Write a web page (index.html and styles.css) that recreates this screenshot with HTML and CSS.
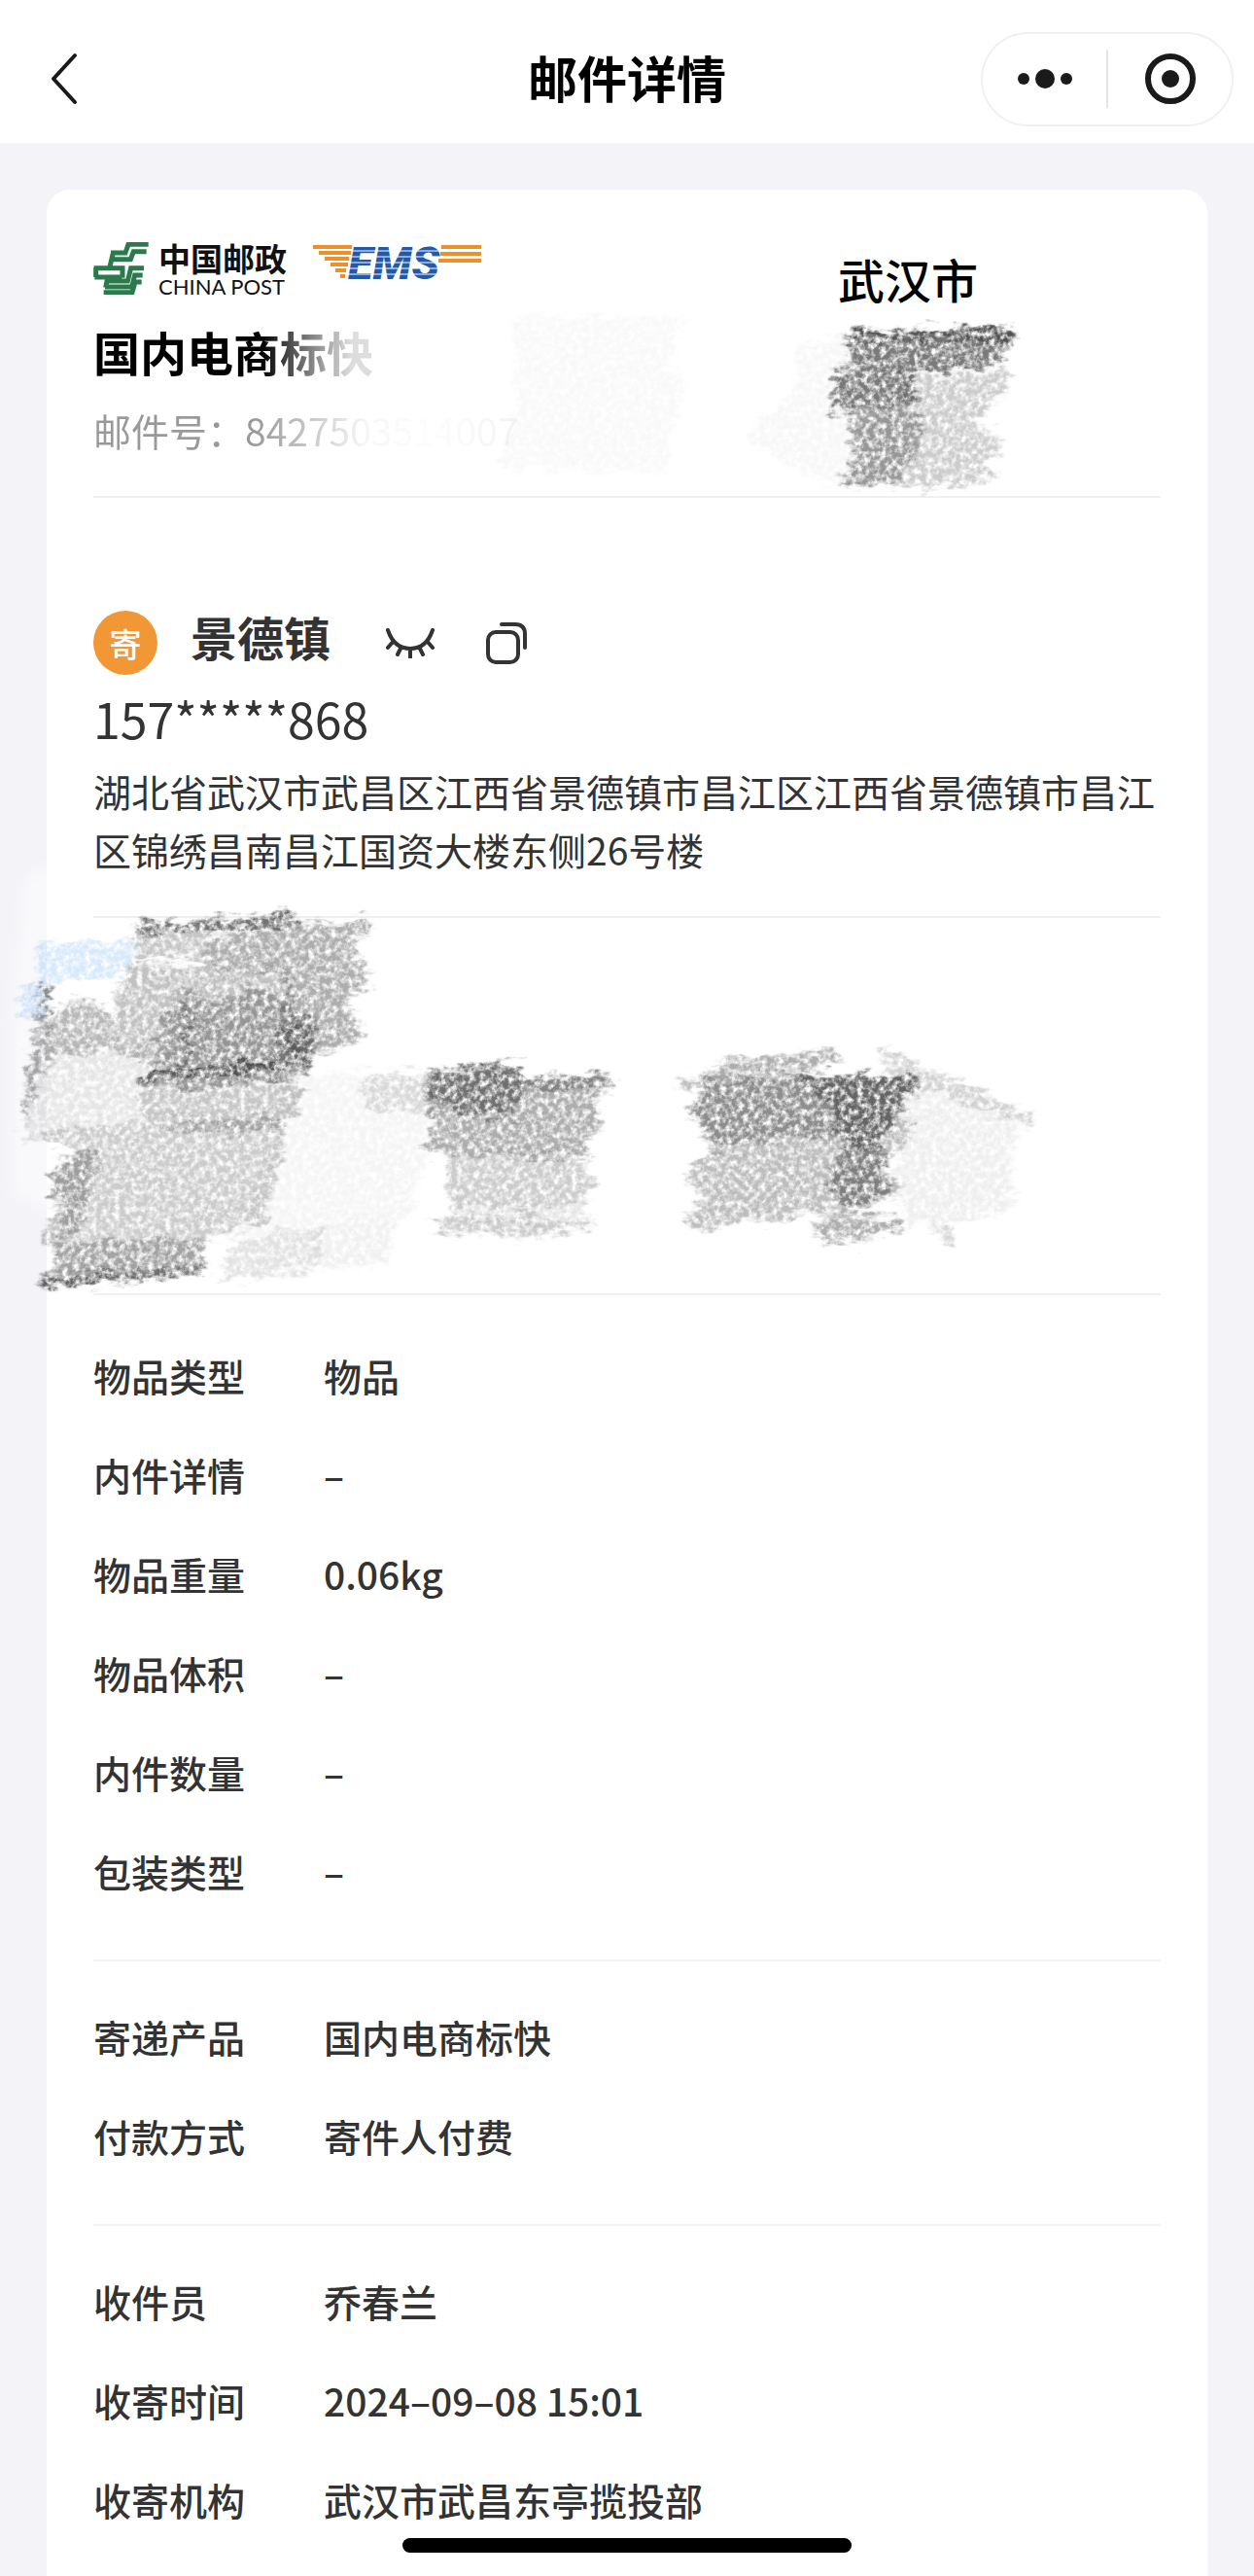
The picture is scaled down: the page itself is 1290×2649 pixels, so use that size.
FILE: index.html
```html
<!DOCTYPE html>
<html lang="zh-CN">
<head>
    <meta charset="UTF-8">
    <meta name="viewport" content="width=device-width, initial-scale=1">
    <title>邮件详情</title>
    <link rel="stylesheet" href="styles.css">
</head>

<body>
<header class="navbar">
    <button class="back" aria-label="返回">
        <svg width="32" height="56" viewBox="0 0 32 56"><path d="M27 4L5 28l22 24"/></svg>
    </button>
    <h1 class="title">邮件详情</h1>
    <div class="capsule">
        <button class="capsule-btn" aria-label="更多">
            <svg width="60" height="24" viewBox="0 0 60 24">
                <circle cx="8" cy="12" r="6"/><circle cx="30" cy="12" r="10"/><circle cx="52" cy="12" r="6"/>
            </svg>
        </button>
        <button class="capsule-btn" aria-label="关闭">
            <svg width="52" height="52" viewBox="0 0 52 52">
                <circle class="ring" cx="26" cy="26" r="23"/><circle cx="26" cy="26" r="9"/>
            </svg>
        </button>
    </div>
</header>

<main class="page">
    <div class="card">
        <section class="summary">
            <div class="product">
                <div class="logos">
                    <svg class="post-mark" width="58" height="54" viewBox="0 0 170 162">
                        <path d="M168 7h-62l-9 26H52M162 29h-40l-9 24H48M60 30L48 80M0 80h88v30M2 108h84M6 78v30M154 80h-40l-10 40H40l-4 20M150 102h-24l-9 36H34M30 155h88l9-32h20"/>
                    </svg>
                    <div class="post-name">
                        <span class="post-cn">中国邮政</span>
                        <span class="post-en">CHINA POST</span>
                    </div>
                    <svg class="ems" width="174" height="48" viewBox="0 0 174 48">
                        <path class="wing" d="M0 2h40M6 8h33M12 14h25M18 20h18M23 26h11M28 32h5M132 2h41M131 9h42M129 16h44"/>
                        <text x="36" y="35">EMS</text>
                        <path class="cut" d="M40 6h90M38 12h92M37 18h92M36 24h92M35 30h92"/>
                    </svg>
                </div>
                <h2 class="product-name">国内电商标快</h2>
                <p class="mail-no">邮件号：8427503514007</p>
            </div>
            <div class="dest">武汉市</div>
            <svg class="smudge smudge-top" width="640" height="220" viewBox="500 310 640 220">
                <g filter="url(#chalk)" fill="#333">
                    <path opacity=".03" d="M530 325L700 325 690 375 705 390 685 485 510 480 530 440z"/>
                    <path opacity=".04" d="M820 358L875 340 875 500 850 498 770 455 770 440 795 425 820 390z"/>
                    <path opacity=".65" d="M870 342L1040 337 1045 345 1040 357 1030 362 1028 376 930 384 872 375 876 355z"/>
                    <path opacity=".6" d="M870 341L1042 336 1045 345 1038 352 990 350 870 349z"/>
                    <path opacity=".65" d="M858 380L930 380 945 395 940 415 925 422 850 423 857 400z"/>
                    <path opacity=".25" d="M930 388L1037 383 1035 405 1015 420 1000 435 1025 450 1030 460 1005 480 1030 488 985 502 865 498 865 488 878 478 872 425 930 420z"/>
                    <path opacity=".35" d="M875 424L950 424 945 465 920 498 866 498 880 480z"/>
                </g>
            </svg>
        </section>

        <section class="sender">
            <div class="sender-head">
                <span class="badge">寄</span>
                <h2 class="sender-name">景德镇</h2>
                <button class="icon-btn eye" aria-label="显示完整信息">
                    <svg width="50" height="32" viewBox="0 0 50 32">
                        <path d="M2 3c4 12 12 19 23 19S44 15 48 3M8 14l-6 7M16 20l-4 8M25 22v9M34 20l4 8M42 14l6 7"/>
                    </svg>
                </button>
                <button class="icon-btn copy" aria-label="复制">
                    <svg width="44" height="44" viewBox="0 0 44 44">
                        <rect x="3" y="11" width="31" height="31" rx="8"/>
                        <path d="M17 3h14q10 0 10 10v14"/>
                    </svg>
                </button>
            </div>
            <p class="phone">157*****868</p>
            <p class="address">湖北省武汉市武昌区江西省景德镇市昌江区江西省景德镇市昌江区锦绣昌南昌江国资大楼东侧26号楼</p>
        </section>

        <!-- 收件人信息已涂抹 -->
        <section class="receiver">
            <svg class="smudge smudge-main" width="1100" height="470" viewBox="0 880 1100 470">
                <defs>
                    <filter id="chalk" x="-5%" y="-5%" width="110%" height="110%" color-interpolation-filters="sRGB">
                        <feGaussianBlur in="SourceGraphic" stdDeviation="2" result="blur"/>
                        <feTurbulence type="fractalNoise" baseFrequency=".05 .12" numOctaves="3" seed="4" result="edge"/>
                        <feDisplacementMap in="blur" in2="edge" scale="26" xChannelSelector="R" yChannelSelector="G" result="rough"/>
                        <feTurbulence type="fractalNoise" baseFrequency=".17" numOctaves="4" seed="9"/>
                        <feColorMatrix values="0 0 0 0 0  0 0 0 0 0  0 0 0 0 0  2.4 0 0 0 -.5" result="grain"/>
                        <feComposite in="rough" in2="grain" operator="in"/>
                    </filter>
                    <filter id="soft" x="-30%" y="-10%" width="160%" height="120%">
                        <feGaussianBlur stdDeviation="8"/>
                    </filter>
                </defs>
                <path fill="#fff" opacity=".5" filter="url(#soft)" d="M24 900L60 890 60 1250 10 1230 10 1050z"/>
                <g filter="url(#chalk)" fill="#333">
                    <path fill="#4a9af0" opacity=".22" d="M36 970L145 970 130 1002 50 1012 45 1050 18 1045 20 1018 38 1005z"/>
                    <path opacity=".7" d="M139 951L308 940 312 953 210 957 140 960z"/>
                    <path opacity=".28" d="M140 960L212 958 212 985 140 985z"/>
                    <path opacity=".4" d="M210 964L380 945 380 960 365 968 368 985 378 993 378 1010 360 1025 358 1040 372 1048 374 1070 350 1078 320 1092 300 1096 290 1000 212 996z"/>
                    <path opacity=".3" d="M118 1025L135 990 212 996 295 996 310 1096 160 1098 118 1080z"/>
                    <path opacity=".3" d="M165 1045L190 1018 230 1030 265 1010 330 1055 315 1096 160 1096z"/>
                    <path opacity=".35" d="M285 1050L330 1050 318 1094 283 1096z"/>
                    <path opacity=".5" d="M190 1035L196 1035 196 1095 190 1095z"/>
                    <path opacity=".5" d="M145 1102L285 1093 322 1089 314 1108 230 1117 147 1117z"/>
                    <path opacity=".7" d="M145 1100L285 1093 285 1104 145 1108z"/>
                    <path opacity=".35" d="M42 1012L52 1012 50 1055 60 1038 85 1025 112 1040 120 1078 60 1085 48 1090z"/>
                    <path opacity=".35" d="M42 1012L52 1012 48 1080 30 1140 26 1175 24 1130 35 1070z"/>
                    <path opacity=".12" d="M30 1080L150 1075 145 1150 60 1165 26 1175z"/>
                    <path opacity=".28" d="M145 1115L310 1115 310 1142 285 1160 250 1165 145 1155z"/>
                    <path opacity=".25" d="M85 1157L290 1150 290 1200 270 1258 200 1275 60 1275 60 1240 50 1210 80 1182 45 1172 48 1164z"/>
                    <path opacity=".3" d="M55 1195L105 1180 92 1230 80 1272 45 1278 50 1255 68 1235 52 1225z"/>
                    <path opacity=".45" d="M55 1277L210 1273 212 1304 45 1326 42 1315 57 1302z"/>
                    <path opacity=".6" d="M42 1314L215 1302 215 1308 45 1326z"/>
                    <path opacity=".05" d="M235 1275L420 1250 450 1160 450 1110 370 1100 290 1110 280 1180z"/>
                    <path opacity=".14" d="M240 1273L330 1262 330 1306 225 1316z"/>
                    <path opacity=".07" d="M325 1262L410 1252 400 1300 325 1306z"/>
                    <path opacity=".14" d="M370 1107L450 1100 450 1150 375 1140z"/>
                    <path opacity=".4" d="M440 1100L535 1095 540 1110 628 1105 630 1120 615 1125 615 1150 620 1160 600 1175 605 1190 450 1185 435 1185 445 1160 435 1125z"/>
                    <path opacity=".25" d="M460 1185L600 1185 600 1200 612 1215 605 1234 585 1240 465 1240 458 1215z"/>
                    <path opacity=".5" d="M445 1100L535 1095 540 1110 530 1150 480 1145 440 1125z"/>
                    <path opacity=".35" d="M540 1108L628 1106 628 1118 535 1122z"/>
                    <path opacity=".25" d="M448 1254L530 1250 612 1256 605 1265 560 1272 448 1265z"/>
                    <path opacity=".12" d="M465 1238L600 1238 600 1255 465 1255z"/>
                    <path opacity=".4" d="M740 1092L862 1081 862 1092 820 1102 735 1106z"/>
                    <path opacity=".32" d="M688 1109L740 1105 945 1105 947 1120 930 1130 930 1145 938 1152 935 1175 915 1185 912 1205 925 1215 925 1230 900 1238 860 1245 710 1265 704 1252 725 1235 705 1210 725 1190 730 1165 710 1150 710 1135 725 1125z"/>
                    <path opacity=".35" d="M725 1108L945 1106 930 1140 905 1180 830 1170 730 1180 715 1140z"/>
                    <path opacity=".45" d="M815 1106L945 1106 930 1130 905 1180 912 1230 870 1240 850 1220 865 1180 855 1140z"/>
                    <path opacity=".4" d="M830 1263L860 1245 930 1252 930 1265 880 1277 850 1275z"/>
                    <path opacity=".08" d="M910 1078L935 1090 1063 1150 1060 1160 1042 1165 1040 1245 960 1260 930 1260 920 1215 935 1130z"/>
                    <path opacity=".16" d="M910 1077L1063 1148 1060 1160 980 1130 905 1095z"/>
                    <path opacity=".2" d="M955 1260L975 1260 988 1285 975 1280z"/>
                </g>
            </svg>
        </section>

        <dl class="group">
            <div class="row"><dt>物品类型</dt><dd>物品</dd></div>
            <div class="row"><dt>内件详情</dt><dd>–</dd></div>
            <div class="row"><dt>物品重量</dt><dd>0.06kg</dd></div>
            <div class="row"><dt>物品体积</dt><dd>–</dd></div>
            <div class="row"><dt>内件数量</dt><dd>–</dd></div>
            <div class="row"><dt>包装类型</dt><dd>–</dd></div>
        </dl>
        <dl class="group">
            <div class="row"><dt>寄递产品</dt><dd>国内电商标快</dd></div>
            <div class="row"><dt>付款方式</dt><dd>寄件人付费</dd></div>
        </dl>
        <dl class="group">
            <div class="row"><dt>收件员</dt><dd>乔春兰</dd></div>
            <div class="row"><dt>收寄时间</dt><dd>2024–09–08 15:01</dd></div>
            <div class="row"><dt>收寄机构</dt><dd>武汉市武昌东亭揽投部</dd></div>
        </dl>
    </div>
</main>
<div class="home-bar"></div>
</body>
</html>
```
FILE: styles.css
```css
* {
    margin: 0;
    padding: 0;
    box-sizing: border-box;
}

body {
    min-height: 100vh;
    display: flex;
    flex-direction: column;
    background: #f3f3f8;
    color: #333;
    font: 500 39px/60px "Noto Sans CJK SC", sans-serif;
    overflow-x: hidden;
}

button {
    border: none;
    background: none;
    display: flex;
    align-items: center;
    justify-content: center;
    cursor: pointer;
}

svg {
    display: block;
    fill: none;
}

.navbar {
    height: 147px;
    padding: 15px 21px 0 50px;
    background: #fff;
    display: grid;
    grid-template-columns: 1fr auto 1fr;
    align-items: center;
}

.back {
    justify-self: start;
}

.back path {
    stroke: #1a1a1a;
    stroke-width: 4;
    stroke-linecap: round;
    stroke-linejoin: round;
}

.title {
    padding-bottom: 4px;
    color: #000;
    font-size: 51px;
    line-height: 72px;
    font-weight: 700;
    margin-right: 29px;
}

.capsule {
    justify-self: end;
    width: 260px;
    height: 97px;
    border: 2px solid #f0f0f0;
    border-radius: 49px;
    display: flex;
    align-items: center;
}

.capsule-btn {
    flex: 1;
    height: 60px;
}

.capsule-btn + .capsule-btn {
    border-left: 2px solid #e5e5e5;
}

.capsule circle {
    fill: #1a1a1a;
}

.capsule .ring {
    fill: none;
    stroke: #1a1a1a;
    stroke-width: 6;
}

.page {
    flex: 1;
    padding: 48px 48px 0;
    display: flex;
}

.card {
    flex: 1;
    min-width: 0;
    padding: 0 48px;
    background: #fff;
    border-radius: 24px 24px 0 0;
}

.summary,
.sender,
.receiver,
.group {
    border-bottom: 2px solid #f0f0f0;
}

.summary {
    position: relative;
    height: 317px;
    padding-top: 52px;
    display: flex;
}

.product {
    flex: 1;
}

.logos {
    display: flex;
    align-items: flex-start;
    height: 60px;
}

.post-mark {
    margin-top: 2px;
}

.post-mark path {
    stroke: #2a7a4c;
    stroke-width: 15;
}

.post-name {
    width: 132px;
    margin: 0 27px 0 9px;
    color: #111;
    display: flex;
    flex-direction: column;
}

.post-cn {
    font-size: 33px;
    line-height: 36px;
    font-weight: 700;
}

.post-en {
    font: 22px/24px Lato, sans-serif;
    white-space: nowrap;
}

.ems {
    margin-top: 5px;
    overflow: visible;
}

.ems text {
    font: italic 900 47px Roboto, sans-serif;
    fill: #2259a8;
}

.ems .wing {
    stroke: #ec8f2e;
    stroke-width: 4;
}

.ems .cut {
    stroke: #fff;
    stroke-width: 1;
}

.product-name,
.mail-no {
    width: max-content;
    color: transparent;
    -webkit-background-clip: text;
    background-clip: text;
}

.product-name {
    margin-top: 18px;
    font-size: 48px;
    line-height: 72px;
    font-weight: 700;
    background-image: linear-gradient(90deg, #000 60%, #777 76%, #ddd 92%);
}

.mail-no {
    margin-top: 15px;
    font-weight: 400;
    background-image: linear-gradient(90deg, #999 38%, #ccc 52%, #f6f6f6 64%, #fdfdfd 80%, #f3f3f3);
}

.dest {
    width: 520px;
    padding-top: 3px;
    color: #000;
    font-size: 48px;
    line-height: 72px;
    text-align: center;
}

.smudge {
    position: absolute;
    pointer-events: none;
}

.smudge-top {
    left: 404px;
    top: 115px;
}

.sender {
    height: 432px;
    padding-top: 108px;
}

.sender-head {
    display: flex;
    align-items: center;
    height: 82px;
}

.badge {
    width: 66px;
    height: 66px;
    border-radius: 50%;
    background: #f19736;
    color: #fff;
    font-size: 33px;
    line-height: 66px;
    text-align: center;
}

.sender-name {
    margin: 0 57px 14px 34px;
    font-size: 48px;
    line-height: 72px;
    font-weight: 700;
}

.icon-btn path,
.icon-btn rect {
    stroke: #333;
    stroke-width: 4;
    stroke-linecap: round;
}

.copy {
    margin-left: 52px;
}

.phone {
    font-size: 50px;
    line-height: 72px;
    font-weight: 400;
}

.address {
    margin-top: 9px;
    font-weight: 400;
}

.receiver {
    position: relative;
    height: 388px;
}

.smudge-main {
    left: -96px;
    top: -64px;
}

.group {
    padding: 26px 0 40px;
}

.receiver + .group {
    padding-top: 31px;
}

.group:last-child {
    padding-bottom: 0;
    border-bottom: none;
}

.row {
    display: flex;
    align-items: center;
    height: 102px;
}

.row dt {
    width: 237px;
}

.home-bar {
    position: fixed;
    left: 50%;
    bottom: 24px;
    width: 462px;
    height: 15px;
    margin-left: -231px;
    border-radius: 8px;
    background: #000;
}
```
